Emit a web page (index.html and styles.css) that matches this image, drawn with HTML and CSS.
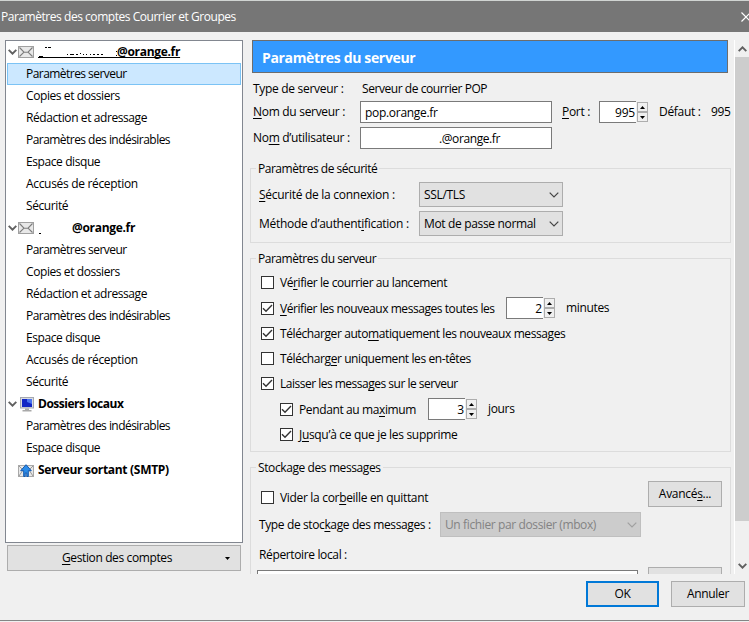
FILE: index.html
```html
<!DOCTYPE html>
<html lang="fr">
<head>
  <meta charset="UTF-8" />
  <meta name="viewport" content="width=device-width, initial-scale=1" />
  <title>Paramètres des comptes Courrier et Groupes</title>
  <link rel="stylesheet" href="styles.css">
</head>
<body>

  <!-- icones -->
  <svg class="symbols" width="0" height="0">
    <symbol id="twisty" viewBox="0 0 9 6"><path d="M.7.900l3.800 3.800L8.300.900" fill="none" stroke="#606060" stroke-width="1.900"/></symbol>
    <symbol id="mail" viewBox="0 0 16 12">
      <rect x=".5" y=".5" width="15" height="11" fill="#e8e8e8" stroke="#a0a0a0"/>
      <path d="M1.500 1.500L6 6.200h4l4.500-4.700M1.500 10.500L6 6.200M14.500 10.500L10 6.200" fill="none" stroke="#7c7c7c" stroke-width="1.100"/>
    </symbol>
    <symbol id="computer" viewBox="0 0 14 15">
      <rect x=".5" y=".5" width="13" height="10.500" fill="#d9dce2" stroke="#a5a8b0"/>
      <rect x="2" y="2" width="10" height="8" fill="#1226c4"/>
      <path d="M7 2h5v5L7 5z" fill="#4b74ef"/>
      <path d="M5 11.500h4v1.500h2.500v1.500h-9V13H5z" fill="#a9a9a9"/>
    </symbol>
    <symbol id="smtp" viewBox="0 0 16 13">
      <rect x=".5" y="1.500" width="15" height="11" fill="#e8e8e8" stroke="#a9a9a9"/>
      <path d="M1 2l4 4-4 6M15 2l-4 4 4 6" fill="none" stroke="#999"/>
      <path d="M8 .7l5.300 6H10.300v5.800H8.800V9H7.200v3.500H5.700V6.700H2.700z" fill="#2c8ce8" stroke="#1259b0"/>
    </symbol>
    <symbol id="check" viewBox="0 0 11 11"><path d="M1 5.300l3 3L10 2" fill="none" stroke="#333" stroke-width="1.400"/></symbol>
    <symbol id="chevron" viewBox="0 0 10 6"><path d="M.7.700L5 5 9.300.700" fill="none" stroke="currentColor" stroke-width="1.200"/></symbol>
    <symbol id="up" viewBox="0 0 5 3"><path d="M0 3h5L2.500 0z"/></symbol>
    <symbol id="down" viewBox="0 0 5 3"><path d="M0 0h5L2.500 3z"/></symbol>
  </svg>

  <div class="titlebar">
    <span>Paramètres des comptes Courrier et Groupes</span>
    <svg class="close" width="10" height="10" viewBox="0 0 10 10"><path d="M.5.500l9 9M9.500.500l-9 9" stroke="#fff" stroke-width="1.200"/></svg>
  </div>

  <div class="main">
    <div class="sidebar">
      <ul class="tree">
        <li class="account"><svg class="twisty"><use href="#twisty"/></svg><svg class="mail"><use href="#mail"/></svg><svg class="masked" width="79" height="16" viewBox="0 0 79 16"><path d="M0 13.500h79M1 12.500h4M7 3.500h2M10 3.500h3M29 10.500h1M32 10.500h4M38 10.500h2M42 9.500h1M45 10.500h1M48 10.500h1M52 10.500h1M55 10.500h2M59 10.500h2M63 10.500h2M78 7.500h1M78 11.500h1" stroke="#000"/></svg><b class="underlined">@orange.fr</b></li>
        <li class="selected tight">Paramètres serveur</li>
        <li>Copies et dossiers</li>
        <li>Rédaction et adressage</li>
        <li class="tight">Paramètres des indésirables</li>
        <li>Espace disque</li>
        <li class="wide">Accusés de réception</li>
        <li>Sécurité</li>
        <li class="account"><svg class="twisty"><use href="#twisty"/></svg><svg class="mail"><use href="#mail"/></svg><svg class="masked" width="34" height="16" viewBox="0 0 34 16"><path d="M1 13.500h2" stroke="#000"/></svg><b>@orange.fr</b></li>
        <li class="tight">Paramètres serveur</li>
        <li>Copies et dossiers</li>
        <li>Rédaction et adressage</li>
        <li class="tight">Paramètres des indésirables</li>
        <li>Espace disque</li>
        <li class="wide">Accusés de réception</li>
        <li>Sécurité</li>
        <li class="account"><svg class="twisty"><use href="#twisty"/></svg><svg class="computer"><use href="#computer"/></svg><b class="folders">Dossiers locaux</b></li>
        <li class="tight">Paramètres des indésirables</li>
        <li>Espace disque</li>
        <li class="account last"><svg class="smtp"><use href="#smtp"/></svg><b>Serveur sortant (SMTP)</b></li>
      </ul>
      <button class="btn manage"><span><u>G</u>estion des comptes</span><svg class="arrow"><use href="#down"/></svg></button>
    </div>

    <div class="panel">
      <h1>Paramètres du serveur</h1>

      <div class="row type-row"><span class="label">Type de serveur :</span><span class="pop">Serveur de courrier POP</span></div>
      <div class="row host-row">
        <span class="label"><u>N</u>om du serveur :</span>
        <input class="field" type="text" value="pop.orange.fr">
        <span class="port"><u>P</u>ort :</span>
        <span class="spin"><span class="num">995</span><span class="steps"><i><svg><use href="#up"/></svg></i><i><svg><use href="#down"/></svg></i></span></span>
        <span class="default">Défaut :</span><span>995</span>
      </div>
      <div class="row user-row"><span class="label">No<u>m</u> d’utilisateur :</span><input class="field user" type="text" value=".@orange.fr"></div>

      <fieldset class="security">
        <legend>Paramètres de sécurité</legend>
        <div class="row"><span class="label"><u>S</u>écurité de la connexion :</span><span class="select"><span>SSL/TLS</span><svg><use href="#chevron"/></svg></span></div>
        <div class="row"><span class="label">Méthode d’authent<u>i</u>fication :</span><span class="select"><span>Mot de passe normal</span><svg><use href="#chevron"/></svg></span></div>
      </fieldset>

      <fieldset class="server">
        <legend>Paramètres du serveur</legend>
        <div class="row"><span class="box"></span><span>Vé<u>r</u>ifier le courrier au lancement</span></div>
        <div class="row tall"><span class="box"><svg><use href="#check"/></svg></span><span class="every"><u>V</u>érifier les nouveaux messages toutes les</span>
          <span class="spin"><span class="num">2</span><span class="steps"><i><svg><use href="#up"/></svg></i><i><svg><use href="#down"/></svg></i></span></span><span class="unit">minutes</span></div>
        <div class="row"><span class="box"><svg><use href="#check"/></svg></span><span>Télécharger auto<u>m</u>atiquement les nouveaux messages</span></div>
        <div class="row"><span class="box"></span><span>Télécharg<u>e</u>r uniquement les en-têtes</span></div>
        <div class="row"><span class="box"><svg><use href="#check"/></svg></span><span class="keep">Laisser les messa<u>g</u>es sur le serveur</span></div>
        <div class="row tall sub"><span class="box"><svg><use href="#check"/></svg></span><span class="days">Pendant au ma<u>x</u>imum</span>
          <span class="spin"><span class="num">3</span><span class="steps"><i><svg><use href="#up"/></svg></i><i><svg><use href="#down"/></svg></i></span></span><span class="unit">jours</span></div>
        <div class="row sub"><span class="box"><svg><use href="#check"/></svg></span><span class="wide">J<u>u</u>squ’à ce que je les supprime</span></div>
      </fieldset>

      <fieldset class="storage">
        <legend>Stockage des messages</legend>
        <div class="row empty"><span class="box"></span><span class="wide">Vider la cor<u>b</u>eille en quittant</span><button class="btn">Avancé<u>s</u>...</button></div>
        <div class="row store"><span class="label">Type de stoc<u>k</u>age des messages :</span><span class="select disabled"><span>Un fichier par dossier (mbox)</span><svg><use href="#chevron"/></svg></span></div>
        <div class="row local">Répertoire local :</div>
        <div class="row path"><input class="field" type="text"><button class="btn"></button></div>
      </fieldset>
    </div>

    <div class="scrollbar">
      <svg><use href="#twisty"/></svg>
      <div class="thumb"></div>
      <svg><use href="#twisty"/></svg>
    </div>
  </div>

  <div class="footer">
    <button class="btn ok">OK</button>
    <button class="btn">Annuler</button>
  </div>

</body>
</html>
```

FILE: styles.css
```css
* {
  box-sizing: border-box;
}
body {
  margin: 0;
  width: 749px;
  height: 622px;
  overflow: hidden;
  background: #f0f0f0;
  color: #000;
  font: 12px/16px "Open Sans", "Noto Sans", sans-serif;
  letter-spacing: -0.41px;
  border-top: 1px solid #d0d4d2;
  display: flex;
  flex-direction: column;
}
.symbols {
  position: absolute;
}
svg {
  display: block;
  flex: none;
}
u {
  text-underline-offset: 2px;
  text-decoration-skip-ink: none;
}
input, button {
  font: inherit;
  letter-spacing: -0.3px;
  color: inherit;
}

.titlebar {
  height: 31px;
  flex: none;
  background: #767676;
  color: #fff;
  letter-spacing: -0.46px;
  display: flex;
  align-items: center;
  justify-content: space-between;
  padding-left: 1px;
  overflow: hidden;
}
.close {
  margin-right: -2px;
}

.main {
  height: 542px;
  flex: none;
  display: flex;
  padding-top: 8px;
  overflow: hidden;
}

/* arbre des comptes */
.sidebar {
  width: 238px;
  margin-left: 5px;
}
.tree {
  margin: 0 0 2px;
  padding: 0;
  height: 503px;
  list-style: none;
  background: #fff;
  border: 1px solid #828790;
}
.tree li {
  height: 22px;
  margin: 0 1px;
  padding-left: 19px;
  display: flex;
  align-items: center;
}
.tree .selected {
  background: #cce8ff;
  border: 1px solid #7bc3f5;
  padding-left: 18px;
}
.tree .account {
  padding-left: 1px;
}
.tree b {
  letter-spacing: -0.31px;
}
.tree .folders {
  letter-spacing: -0.5px;
}
.tree .tight {
  letter-spacing: -0.54px;
}
.wide {
  letter-spacing: -0.32px;
}
.twisty {
  width: 9px;
  height: 6px;
  margin-right: 1px;
}
.mail {
  width: 16px;
  height: 12px;
  margin-right: 4px;
}
.computer {
  width: 14px;
  height: 15px;
  margin: 0 4px 0 2px;
}
.smtp {
  width: 16px;
  height: 13px;
  margin-right: 4px;
}
.tree .last {
  padding-left: 11px;
}
.underlined {
  text-decoration: underline;
  text-decoration-skip-ink: none;
}

.btn {
  height: 26px;
  padding: 0;
  background: #e1e1e1;
  border: 1px solid #adadad;
}
.manage {
  width: 234px;
  margin-left: 2px;
  letter-spacing: -0.38px;
  display: flex;
  align-items: center;
}
.manage span {
  flex: 1;
  padding-left: 1px;
}
.arrow {
  width: 5px;
  height: 3px;
  margin-right: 10px;
}

/* panneau de droite */
.panel {
  width: 481px;
  height: 534px;
  margin-left: 7px;
  overflow: hidden;
}
h1 {
  margin: 0 3px 8px 2px;
  height: 33px;
  padding-left: 9px;
  font-size: 14px;
  line-height: 34px;
  letter-spacing: -0.34px;
  color: #fff;
  background: #3399ff;
  border: 1px solid #6d6d6d;
}
.row {
  display: flex;
  align-items: center;
}
fieldset .label, .box + span {
  padding-top: 1px;
}
.panel > .row {
  padding-left: 3px;
}
.panel > .row .label {
  width: 107px;
}
.type-row, .host-row, .user-row {
  letter-spacing: -0.3px;
}
.type-row {
  height: 16px;
  margin-bottom: 4px;
}
.pop {
  margin-left: 2px;
  letter-spacing: -0.44px;
}
.field {
  width: 192px;
  height: 22px;
  padding: 0 4px;
  background: #fff;
  border: 1px solid #7a7a7a;
}
.user {
  padding-left: 78px;
  letter-spacing: -0.4px;
}
.user-row {
  margin-top: 4px;
}
.port {
  width: 37px;
  margin-left: 10px;
}
.default {
  width: 52px;
  margin-left: 11px;
}
.spin {
  display: flex;
  align-items: center;
  letter-spacing: -0.2px;
}
.num {
  width: 37px;
  height: 22px;
  padding-right: 1px;
  line-height: 22px;
  text-align: right;
  background: #fff;
  border: 1px solid #7a7a7a;
  border-right: 0;
}
.steps {
  margin-left: 1px;
}
.steps i {
  width: 11px;
  height: 10px;
  display: flex;
  align-items: center;
  justify-content: center;
  background: #f0f0f0;
  border: 1px solid #adadad;
}
.steps svg {
  width: 5px;
  height: 3px;
}

fieldset {
  margin: 0;
  padding: 0 0 0 8px;
  border: 1px solid #dcdcdc;
}
legend {
  height: 17px;
  margin-left: -3px;
  padding: 1px 2px 0;
  letter-spacing: -0.48px;
}
.security {
  height: 83px;
  margin-top: 11px;
}
.security .row {
  height: 25px;
  margin: 5px 0 4px;
}
.security .row + .row {
  margin: 0;
}
.security .label {
  width: 160px;
  letter-spacing: -0.28px;
}
.select {
  width: 144px;
  height: 25px;
  padding: 0 3px 0 4px;
  display: flex;
  align-items: center;
  justify-content: space-between;
  background: #e1e1e1;
  border: 1px solid #adadad;
  color: #000;
  letter-spacing: -0.34px;
}
.select svg {
  width: 10px;
  height: 6px;
  color: #444;
}

.server {
  height: 202px;
  margin-top: 7px;
  padding-top: 3px;
}
.server .row {
  height: 25px;
  padding-left: 2px;
}
.server .tall {
  height: 26px;
}
.server .sub {
  padding-left: 21px;
}
.box {
  width: 13px;
  height: 13px;
  margin-right: 6px;
  flex: none;
  background: #fff;
  border: 1px solid #333;
}
.box svg {
  width: 11px;
  height: 11px;
}
.every {
  width: 226px;
  letter-spacing: -0.44px;
}
.keep {
  letter-spacing: -0.5px;
}
.days {
  width: 129px;
  letter-spacing: -0.38px;
}
.unit {
  margin-left: 11px;
  letter-spacing: -0.34px;
}

.storage {
  height: 150px;
  margin-top: 7px;
}
.storage legend {
  letter-spacing: -0.4px;
}
.empty {
  height: 26px;
  margin-top: 5px;
  padding-left: 2px;
  align-items: flex-end;
}
.empty .box {
  margin-bottom: 3px;
}
.empty .wide {
  margin-bottom: 1px;
}
.empty .btn, .path .btn {
  width: 74px;
  margin: 0 8px 0 auto;
}
.store {
  margin-top: 5px;
}
.store .label {
  width: 181px;
  letter-spacing: -0.38px;
}
.disabled {
  width: 201px;
  color: #838383;
  background: #cccccc;
  border-color: #bfbfbf;
}
.store .disabled {
  letter-spacing: -0.38px;
}
.disabled svg {
  color: #a0a0a0;
}
.local {
  height: 16px;
  margin: 10px 0 4px;
  letter-spacing: -0.36px;
}
.path {
  align-items: flex-start;
  margin-left: -2px;
}
.path .field {
  width: 381px;
  margin-top: 3px;
}

.scrollbar {
  width: 15px;
  margin-left: 3px;
  height: 534px;
  border-left: 1px solid #fff;
  display: flex;
  flex-direction: column;
  align-items: center;
}
.scrollbar svg {
  width: 9px;
  height: 6px;
  margin: 6px 0 5px;
  transform: rotate(180deg);
}
.thumb {
  width: 14px;
  height: 464px;
  background: #cdcdcd;
}
.scrollbar .thumb + svg {
  margin-top: 42px;
  transform: none;
}

.footer {
  height: 47px;
  flex: none;
  display: flex;
  justify-content: flex-end;
  gap: 12px;
  padding: 7px 4px 0;
  border-bottom: 1px solid #858585;
}
.footer .btn {
  width: 74px;
}
.footer .ok {
  width: 73px;
  border: 2px solid #0078d7;
}
```
